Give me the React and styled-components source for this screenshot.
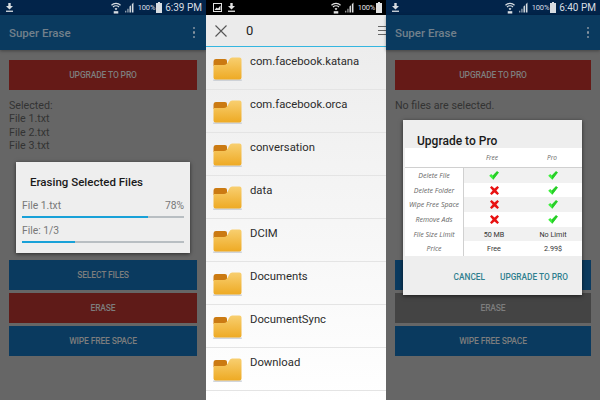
import styled, { createGlobalStyle } from "styled-components"

const GlobalStyle = createGlobalStyle`
  html, body { margin: 0; padding: 0; background: #fff; }
  body { font-family: Roboto, "Liberation Sans", sans-serif; }
`

const folders = [
  "com.facebook.katana",
  "com.facebook.orca",
  "conversation",
  "data",
  "DCIM",
  "Documents",
  "DocumentSync",
  "Download",
]

const features = [
  ["Delete File", true, true],
  ["Delete Folder", false, true],
  ["Wipe Free Space", false, true],
  ["Remove Ads", false, true],
  ["File Size Limit", "50 MB", "No Limit"],
  ["Price", "Free", "2.99$"],
]

function Wifi({ color = "#d8dde2" }) {
  return (
    <svg width="10" height="12" viewBox="0 0 11 13">
      <path d="M0.5 3.5 A7 7 0 0 1 10.5 3.5" fill="none" stroke={color} strokeWidth="1.3" />
      <path d="M2.2 5.4 A4.6 4.6 0 0 1 8.8 5.4" fill="none" stroke={color} strokeWidth="1.3" />
      <path d="M3.9 7.2 A2.3 2.3 0 0 1 7.1 7.2 L5.5 9 Z" fill={color} />
      <rect x="3" y="10" width="5" height="2.6" fill={color} />
    </svg>
  )
}

function Signal({ color = "#d8dde2" }) {
  return (
    <svg width="9" height="11" viewBox="0 0 10 11">
      <path d="M0 11 V9 H1.5 V11 Z M2.5 11 V7 H4 V11 Z" fill={color} opacity="0.65" />
      <path d="M5 11 V4.5 L6.6 3 V11 Z M7.6 11 V2 L9.4 0 V11 Z" fill={color} />
    </svg>
  )
}

function Battery({ color = "#d8dde2" }) {
  return (
    <svg width="6" height="11" viewBox="0 0 6 11">
      <path d="M2 0 H4 V1 H6 V11 H0 V1 H2 Z" fill={color} />
    </svg>
  )
}

function Download({ color = "#d8dde2" }) {
  return (
    <svg width="7" height="9" viewBox="0 0 7 9">
      <path d="M2.3 0 H4.7 V3 H7 L3.5 6.4 L0 3 H2.3 Z" fill={color} />
      <rect x="0" y="7.6" width="7" height="1.3" fill={color} />
    </svg>
  )
}

function ImageIcon() {
  return (
    <svg width="9" height="9" viewBox="0 0 9 9">
      <rect x="0.5" y="0.5" width="8" height="8" fill="none" stroke="#e2e2e2" strokeWidth="1" />
      <path d="M1.5 7 L3.6 4.5 L5 5.6 L7.5 2.6 V7 Z" fill="#e2e2e2" />
    </svg>
  )
}

function FolderIcon() {
  return (
    <svg width="29" height="24" viewBox="0 0 29 24">
      <defs>
        <linearGradient id="folderFront" x1="0" y1="0" x2="0" y2="1">
          <stop offset="0" stopColor="#f8cf70" />
          <stop offset="1" stopColor="#eeaa24" />
        </linearGradient>
      </defs>
      <rect x="0" y="22.4" width="29" height="1.4" rx="0.7" fill="#c2c8d0" />
      <path d="M0.5 5 Q0.5 2 3 2 H12 Q14 2 14 4 V9 H0.5 Z" fill="#cb7a12" />
      <path d="M0.5 8 H11 Q14 8 16 3 Q17 0.5 19 0.5 H26.5 Q28.5 0.5 28.5 2.5 V20.5 Q28.5 22.5 26.5 22.5 H2.5 Q0.5 22.5 0.5 20.5 Z" fill="url(#folderFront)" />
    </svg>
  )
}

function Check() {
  return (
    <svg width="10" height="9" viewBox="0 0 10 9">
      <path d="M0.2 4.8 L2.2 3 L3.9 4.6 L8 0.2 L9.8 1.4 L4.2 8.8 Z" fill="#3cf03c" />
      <path d="M3.9 4.6 L8 0.2 L9.8 1.4 L4.2 8.8 Z" fill="#28cc28" />
    </svg>
  )
}

function Cross() {
  return (
    <svg width="9" height="9" viewBox="0 0 9 9">
      <path d="M0 1.6 L1.6 0 L4.5 2.4 L7.4 0 L9 1.6 L6.4 4.5 L9 7.4 L7.4 9 L4.5 6.6 L1.6 9 L0 7.4 L2.6 4.5 Z" fill="#e81212" />
    </svg>
  )
}

function AppScreen({ width, time, selected, selectLabel, children }) {
  return (
    <Phone $width={width}>
      <StatusBar $tint="#02244a">
        <StatusLeft><Download /></StatusLeft>
        <StatusRight>
          <Wifi />
          <Signal />
          <Percent>100%</Percent>
          <Battery />
          <Clock>{time}</Clock>
        </StatusRight>
      </StatusBar>
      <Toolbar>
        <AppTitle>Super Erase</AppTitle>
        <Dots><i /><i /><i /></Dots>
      </Toolbar>
      <Content>
        <ActionButton $color="#651a17">UPGRADE TO PRO</ActionButton>
        <Selection>{selected}</Selection>
        <ButtonStack>
          <ActionButton $color="#0a3a5f">{selectLabel}</ActionButton>
          {children}
          <ActionButton $color="#0a3a5f">WIPE FREE SPACE</ActionButton>
        </ButtonStack>
      </Content>
    </Phone>
  )
}

function Progress({ value }) {
  return (
    <Track>
      <Fill style={{ width: `${value}%` }} />
    </Track>
  )
}

export default function App() {
  return (
    <Wrapper>
      <GlobalStyle />

      <AppScreen
        width={206}
        time="6:39 PM"
        selectLabel="SELECT FILES"
        selected={<>Selected:<br />File 1.txt<br />File 2.txt<br />File 3.txt</>}
      >
        <ActionButton $color="#5f1b18">ERASE</ActionButton>
      </AppScreen>
      <ProgressDialog>
        <ProgressTitle>Erasing Selected Files</ProgressTitle>
        <ProgressRow><span>File 1.txt</span><span>78%</span></ProgressRow>
        <Progress value={78} />
        <ProgressRow $second><span>File: 1/3</span></ProgressRow>
        <Progress value={33} />
      </ProgressDialog>

      <Phone $width={180}>
        <StatusBar $tint="#000">
          <StatusLeft $offset><ImageIcon /><Download color="#e2e2e2" /></StatusLeft>
          <StatusRight $clip>
            <Wifi color="#e2e2e2" />
            <Signal color="#e2e2e2" />
            <Percent $light>100%</Percent>
            <Battery color="#e2e2e2" />
          </StatusRight>
        </StatusBar>
        <PickerBar>
          <svg width="12" height="12" viewBox="0 0 12 12">
            <path d="M0.5 0.5 L11.5 11.5 M11.5 0.5 L0.5 11.5" stroke="#555" strokeWidth="1.1" />
          </svg>
          <PickerCount>0</PickerCount>
          <PickerMenu><i /><i /><i /></PickerMenu>
        </PickerBar>
        <FolderList>
          {folders.map((name) => (
            <FolderRow key={name}>
              <FolderIcon />
              <FolderName>{name}</FolderName>
            </FolderRow>
          ))}
        </FolderList>
      </Phone>

      <AppScreen width={214} time="6:40 PM" selected="No files are selected.">
        <ActionButton $color="#444">ERASE</ActionButton>
      </AppScreen>
      <UpgradeDialog>
        <UpgradeTitle>Upgrade to Pro</UpgradeTitle>
        <Table>
          <HeadRow>
            <span />
            <Italic>Free</Italic>
            <Italic>Pro</Italic>
          </HeadRow>
          {features.map(([label, free, pro], index) => (
            <FeatureRow key={label} $shaded={index % 2 === 0}>
              <FeatureLabel>{label}</FeatureLabel>
              <Cell>{free === true ? <Check /> : free === false ? <Cross /> : free}</Cell>
              <Cell>{pro === true ? <Check /> : pro}</Cell>
            </FeatureRow>
          ))}
        </Table>
        <DialogActions>
          <DialogAction>CANCEL</DialogAction>
          <DialogAction>UPGRADE TO PRO</DialogAction>
        </DialogActions>
      </UpgradeDialog>
    </Wrapper>
  )
}

const Wrapper = styled.div`
  position: relative;
  display: flex;
  width: 600px;
  height: 400px;
  overflow: hidden;
`

const Phone = styled.div`
  display: flex;
  flex-direction: column;
  flex: 0 0 ${(p) => p.$width}px;
  width: ${(p) => p.$width}px;
  height: 400px;
  background: ${(p) => (p.$width === 180 ? "#fff" : "#666")};
`

const StatusBar = styled.div`
  display: flex;
  align-items: center;
  justify-content: space-between;
  flex: 0 0 15px;
  padding: 0 3px 0 6px;
  background: ${(p) => p.$tint};
  overflow: hidden;
`

const StatusLeft = styled.div`
  display: flex;
  align-items: center;
  gap: 6px;
  padding-left: ${(p) => (p.$offset ? "1px" : "0")};
`

const StatusRight = styled.div`
  display: flex;
  align-items: center;
  gap: 4px;
  margin-right: ${(p) => (p.$clip ? "1px" : "0")};
`

const Percent = styled.span`
  margin-right: -3px;
  font-size: 7.5px;
  color: ${(p) => (p.$light ? "#e2e2e2" : "#d8dde2")};
  letter-spacing: -0.2px;
`

const Clock = styled.span`
  font-size: 10px;
  color: #d8dde2;
  margin-left: -1px;
  margin-right: 1px;
`

const Toolbar = styled.div`
  display: flex;
  align-items: center;
  justify-content: space-between;
  flex: 0 0 35px;
  padding: 0 11px 0 9px;
  background: #0a3a5f;
  box-shadow: 0 1px 3px rgba(0, 0, 0, 0.35);
`

const AppTitle = styled.div`
  font-size: 11.5px;
  font-weight: 500;
  color: #72808b;
`

const Dots = styled.div`
  display: flex;
  flex-direction: column;
  gap: 2px;

  i {
    display: block;
    width: 2.5px;
    height: 2.5px;
    background: #8795a0;
    border-radius: 50%;
  }
`

const Content = styled.div`
  display: flex;
  flex-direction: column;
  flex: 1;
  padding: 10px 9px 44px;
`

const ActionButton = styled.div`
  display: flex;
  align-items: center;
  justify-content: center;
  height: 30px;
  background: ${(p) => p.$color};
  color: #7d7d7d;
  font-size: 8.5px;
  font-weight: 500;
  letter-spacing: -0.15px;
`

const Selection = styled.div`
  margin-top: 9px;
  font-size: 10.7px;
  line-height: 13.3px;
  color: #333;
`

const ButtonStack = styled.div`
  display: flex;
  flex-direction: column;
  gap: 3px;
  margin-top: auto;
`

const ProgressDialog = styled.div`
  position: absolute;
  left: 16px;
  top: 162px;
  box-sizing: border-box;
  width: 174px;
  height: 91px;
  padding: 13px 6px 0;
  background: #eee;
  box-shadow: 0 1px 4px rgba(0, 0, 0, 0.6);
`

const ProgressTitle = styled.div`
  padding-left: 8px;
  font-size: 11.5px;
  font-weight: 500;
  line-height: 14px;
  color: #1a1a1a;
`

const ProgressRow = styled.div`
  display: flex;
  justify-content: space-between;
  margin-top: ${(p) => (p.$second ? "7px" : "11px")};
  margin-bottom: 4px;
  font-size: 10.3px;
  line-height: 12px;
  color: #777;
`

const Track = styled.div`
  height: 2px;
  background: #b8bec2;
`

const Fill = styled.div`
  height: 2px;
  background: #18a1d8;
`

const PickerBar = styled.div`
  display: flex;
  align-items: center;
  flex: 0 0 31px;
  padding-left: 9px;
  background: #ebebeb;
  border-bottom: 1px solid #35b6e0;
  overflow: hidden;
`

const PickerCount = styled.span`
  margin-left: 19px;
  font-size: 13px;
  color: #222;
`

const PickerMenu = styled.div`
  display: flex;
  flex-direction: column;
  gap: 2.5px;
  margin-left: auto;
  margin-right: -1px;

  i {
    display: block;
    width: 9px;
    height: 1.3px;
    background: #666;
  }
`

const FolderList = styled.div`
  display: flex;
  flex-direction: column;
  flex: 1;
  background: linear-gradient(#ededed, #ffffff);
`

const FolderRow = styled.div`
  display: flex;
  align-items: flex-start;
  gap: 8px;
  box-sizing: border-box;
  height: 43px;
  padding: 10px 0 0 7px;
  border-bottom: 1px solid #e4e4e4;
`

const FolderName = styled.div`
  font-size: 11.3px;
  line-height: 13px;
  margin-top: -2px;
  color: #2c2c2c;
`

const UpgradeDialog = styled.div`
  position: absolute;
  left: 403px;
  top: 120px;
  display: flex;
  flex-direction: column;
  box-sizing: border-box;
  width: 179px;
  height: 175px;
  background: #eee;
  box-shadow: 0 1px 4px rgba(0, 0, 0, 0.6);
`

const UpgradeTitle = styled.div`
  flex: 0 0 28px;
  padding: 14px 0 0 14px;
  box-sizing: border-box;
  font-size: 12px;
  line-height: 14px;
  font-weight: 500;
  color: #1a1a1a;
`

const Table = styled.div`
  display: flex;
  flex-direction: column;
  margin-left: 2px;
  background: #fff;
`

const HeadRow = styled.div`
  display: grid;
  grid-template-columns: 57px 60px 60px;
  align-items: center;
  height: 20px;
  background: #fff;
  border-bottom: 1px solid #d0d0d0;
  box-sizing: border-box;
`

const Italic = styled.span`
  font-family: "Open Sans", sans-serif;
  font-style: italic;
  font-size: 6.5px;
  color: #666;
  text-align: center;
`

const FeatureRow = styled.div`
  display: grid;
  grid-template-columns: 59px 60px 58px;
  align-items: center;
  height: 14.7px;
  background: ${(p) => (p.$shaded ? "#f1f1f1" : "#fff")};
`

const FeatureLabel = styled.div`
  display: flex;
  align-items: center;
  justify-content: center;
  height: 100%;
  border-right: 1px solid #d0d0d0;
  background: #fff;
  font-family: "Open Sans", sans-serif;
  font-style: italic;
  font-size: 7px;
  color: #666;
  white-space: nowrap;
`

const Cell = styled.div`
  display: flex;
  align-items: center;
  justify-content: center;
  font-size: 7.2px;
  color: #333;
`

const DialogActions = styled.div`
  display: flex;
  justify-content: flex-end;
  gap: 15px;
  padding: 16px 14px 0 0;
`

const DialogAction = styled.span`
  font-size: 8.3px;
  font-weight: 500;
  color: #2f7f8f;
`
